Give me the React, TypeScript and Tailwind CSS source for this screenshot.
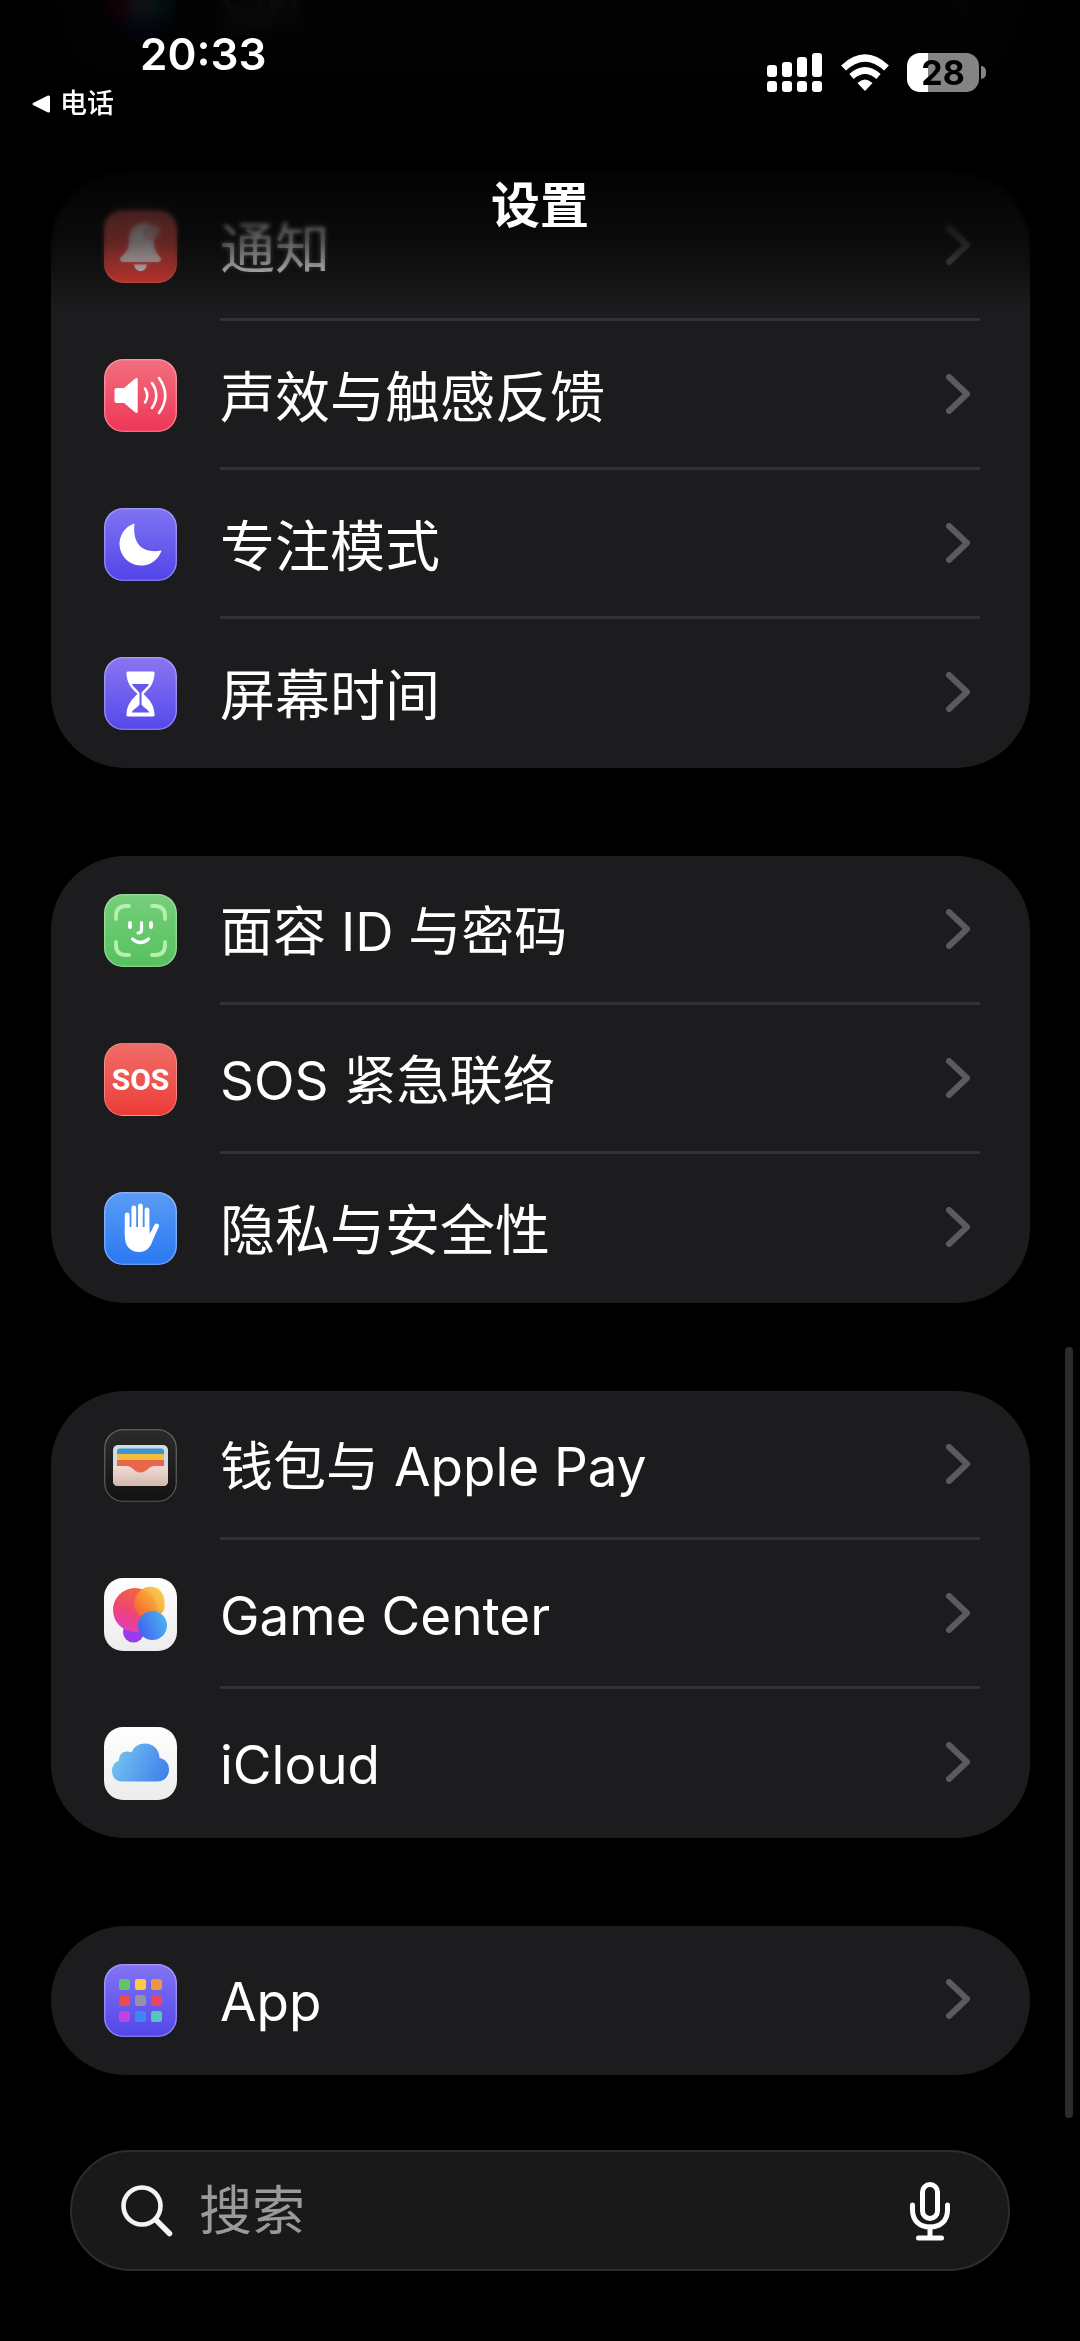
import type { ReactNode } from "react";

type Row = { label: string; icon: ReactNode };

function Tile({ id, from, to, rim = 0.35, children }: { id: string; from: string; to: string; rim?: number; children?: ReactNode }) {
  return (
    <svg viewBox="0 0 73 73" className="size-[73px] shrink-0" aria-hidden="true">
      <defs>
        <linearGradient id={id} x1="0" y1="0" x2="0" y2="1">
          <stop offset="0" stopColor={from} />
          <stop offset="1" stopColor={to} />
        </linearGradient>
      </defs>
      <rect width="73" height="73" rx="19" fill={`url(#${id})`} />
      <rect x="0.75" y="0.75" width="71.5" height="71.5" rx="18.5" fill="none" stroke="#fff" strokeOpacity={rim} strokeWidth="1.2" />
      {children}
    </svg>
  );
}

function SiriIcon() {
  return (
    <Tile id="siri" from="#1c1c1e" to="#111" rim={0.1}>
      <circle cx="20" cy="34" r="16" fill="#e0246a" />
      <circle cx="54" cy="34" r="16" fill="#1cc8b4" />
      <circle cx="38" cy="52" r="16" fill="#2a50f0" />
      <circle cx="38" cy="34" r="12" fill="#cfe8ff" />
    </Tile>
  );
}

function BellIcon() {
  return (
    <Tile id="bell" from="#f4706b" to="#ef4038" rim={0.15}>
      <path
        d="M44 13 C32 12 25 19 25 30 C25 39 22 43 17 47 C15 49 16 52 19 52 H54 C57 52 58 49 56 47 C53 44 51 40 50 36 L50 28 L57 17 C53 20 48 15 44 13 Z"
        fill="#fff"
        fillOpacity="0.9"
      />
      <path d="M30 54.500 H43 C42 59 39.500 61 36.500 61 C33.500 61 31 59 30 54.500 Z" fill="#fff" />
      <circle cx="48" cy="22" r="9" fill="#f0a8a4" fillOpacity="0.55" />
    </Tile>
  );
}

function SoundIcon() {
  return (
    <Tile id="sound" from="#f2707f" to="#ee3656">
      <path d="M13 29 H20 L31 19.700 C32.500 18.500 33.700 19 33.700 20.700 V52.300 C33.700 54 32.500 54.500 31 53.300 L20 44 H13 C11.300 44 10.500 43.200 10.500 41.500 V31.500 C10.500 29.800 11.300 29 13 29 Z" fill="#fff" />
      <g fill="none" stroke="#fff" strokeWidth="2.600" strokeLinecap="round">
        <path d="M41 29.500 Q45.500 36.500 41 43.500" />
        <path d="M48 24 Q56.500 36.500 48 49" />
        <path d="M55 19 Q67.500 36.500 55 54" />
      </g>
    </Tile>
  );
}

function MoonIcon() {
  return (
    <Tile id="moon" from="#7f74f2" to="#5145e8">
      <path d="M30.500 15.500 C28 35 38 46 57.500 42.500 A21.500 21.500 0 1 1 30.500 15.500 Z" fill="#fff" />
    </Tile>
  );
}

function HourglassIcon() {
  return (
    <Tile id="hourglass" from="#8a76f2" to="#5548ea">
      <path
        d="M24 14.500 H49 Q51 14.500 50.500 17 C50 26 46 31 39.500 37 C46 43 50 48 50.500 57 Q51 59.500 49 59.500 H24 Q22 59.500 22.500 57 C23 48 27 43 33.500 37 C27 31 23 26 22.500 17 Q22 14.500 24 14.500 Z"
        fill="#fff"
      />
      <path d="M28 27 H45 C43 31 39 33 37.500 36 V47.500 C39 50 43.500 52 45.500 55.500 H27.500 C29.500 52 34 50 35.500 47.500 V36 C34 33 30 31 28 27 Z" fill="#6558ec" />
    </Tile>
  );
}

function FaceIcon() {
  return (
    <Tile id="face" from="#76cf7c" to="#56c15d">
      <g fill="none" stroke="#b6efae" strokeWidth="3.800" strokeLinecap="round">
        <path d="M12 25 V22 Q12 12 22 12 H25" />
        <path d="M48 12 H51 Q61 12 61 22 V25" />
        <path d="M12 48 V51 Q12 61 22 61 H25" />
        <path d="M48 61 H51 Q61 61 61 51 V48" />
      </g>
      <g fill="none" stroke="#fff" strokeWidth="3.800" strokeLinecap="round">
        <path d="M26 29 V33" />
        <path d="M47 29 V33" />
        <path d="M37.500 28.500 V36 Q37.500 39 34 39" strokeWidth="3.200" />
        <path d="M28.500 45 Q36.500 52 44.500 45" strokeWidth="3.200" />
      </g>
    </Tile>
  );
}

function SosIcon() {
  return (
    <span className="grid size-[73px] shrink-0 place-items-center rounded-[19px] border border-white/30 bg-linear-to-b from-[#f06c68] to-[#ec3a37] font-['Roboto','Liberation_Sans',sans-serif] text-[30px] leading-none font-bold text-white">
      SOS
    </span>
  );
}

function HandIcon() {
  return (
    <Tile id="hand" from="#5a9cf5" to="#2a78f2">
      <g stroke="#fff" strokeWidth="4.800" strokeLinecap="round" fill="none">
        <path d="M23.200 23 V42" />
        <path d="M29.800 16 V40" />
        <path d="M36.400 14 V40" />
        <path d="M43 18 V42" />
        <path d="M52.500 34 L46 47" />
      </g>
      <path d="M20.800 35 H45.400 V42 L50 36 L54.500 35 L48.500 49 C46 56 42 60 35.500 60 C26 60 20.800 54 20.800 44 Z" fill="#fff" />
    </Tile>
  );
}

function WalletIcon() {
  return (
    <Tile id="wallet" from="#2b2b2c" to="#121213" rim={0.3}>
      <defs>
        <linearGradient id="pocket" x1="0" y1="0" x2="0" y2="1">
          <stop offset="0" stopColor="#efdcd4" />
          <stop offset="1" stopColor="#d3b8ad" />
        </linearGradient>
      </defs>
      <rect x="9" y="16" width="55" height="41" rx="5" fill="#cfdde2" />
      <path d="M13 25 V22 Q13 19.500 16 19.500 H57 Q60 19.500 60 22 V25 Z" fill="#3d96d4" />
      <rect x="13" y="25" width="47" height="6" fill="#f3bd3c" />
      <rect x="13" y="31" width="47" height="14" fill="#e8664a" />
      <path
        d="M9 37 H22 C29 37 30 43.500 36.500 43.500 C43 43.500 44 37 51 37 H64 V52 Q64 57 59 57 H14 Q9 57 9 52 Z"
        fill="url(#pocket)"
      />
    </Tile>
  );
}

function GameCenterIcon() {
  return (
    <Tile id="game" from="#ffffff" to="#ececee" rim={0}>
      <defs>
        <linearGradient id="gcRed" x1="0.7" y1="0" x2="0.3" y2="1">
          <stop offset="0" stopColor="#f4683c" />
          <stop offset="0.550" stopColor="#ee4672" />
          <stop offset="1" stopColor="#e23cc0" />
        </linearGradient>
        <linearGradient id="gcYellow" x1="1" y1="0" x2="0" y2="1">
          <stop offset="0" stopColor="#f9d03c" />
          <stop offset="0.400" stopColor="#f8a834" />
          <stop offset="1" stopColor="#f2502c" />
        </linearGradient>
        <linearGradient id="gcBlue" x1="1" y1="0.2" x2="0" y2="0.6">
          <stop offset="0" stopColor="#4cb4f4" />
          <stop offset="1" stopColor="#3e66ec" />
        </linearGradient>
      </defs>
      <circle cx="29.500" cy="54" r="10.500" fill="#9a3cec" />
      <circle cx="31" cy="32" r="22" fill="url(#gcRed)" />
      <path d="M40 10 Q52 6 58 15 Q62 21 60 32 Q57 38 46 44 Q32 40 30 26 Q31 15 40 10 Z" fill="url(#gcYellow)" fillOpacity="0.9" />
      <circle cx="48.500" cy="47.500" r="14.500" fill="url(#gcBlue)" />
    </Tile>
  );
}

function CloudIcon() {
  return (
    <Tile id="icloud" from="#ffffff" to="#ececee" rim={0}>
      <defs>
        <linearGradient id="cloudFill" x1="0" y1="0.4" x2="1" y2="0.7">
          <stop offset="0" stopColor="#73c4f0" />
          <stop offset="1" stopColor="#4080ec" />
        </linearGradient>
      </defs>
      <path
        d="M18 54.500 C11.500 54.500 8 49.500 8 44 C8 38.500 11 35 15 33.500 C14.500 27 20.500 22.500 27.500 25.500 C30 19.500 35 16.500 41 16.500 C49.500 16.500 55.500 23 55.500 31 C61.500 32 65 36.500 65 42.500 C65 49.500 60 54.500 53.500 54.500 Z"
        fill="url(#cloudFill)"
      />
    </Tile>
  );
}

const dots = ["#62c46c", "#f8cb46", "#ee9545", "#ec4a4c", "#9492a4", "#ea4664", "#c244e0", "#3f88f4", "#58c4c0"];

function AppsIcon() {
  return (
    <Tile id="apps" from="#8374f4" to="#5246ea">
      {dots.map((color, i) => (
        <rect key={color} x={15 + (i % 3) * 16} y={15 + Math.floor(i / 3) * 16} width="11" height="11" rx="2.500" fill={color} />
      ))}
    </Tile>
  );
}

function Chevron() {
  return (
    <svg viewBox="0 0 24 40" className="h-10 w-6 shrink-0" fill="none" stroke="#5b5b5f" strokeWidth="6" strokeLinecap="round" strokeLinejoin="round" aria-hidden="true">
      <path d="M3 3 L21 20 L3 37" />
    </svg>
  );
}

const groups: Row[][] = [
  [{ label: "Siri", icon: <SiriIcon /> }],
  [
    { label: "通知", icon: <BellIcon /> },
    { label: "声效与触感反馈", icon: <SoundIcon /> },
    { label: "专注模式", icon: <MoonIcon /> },
    { label: "屏幕时间", icon: <HourglassIcon /> },
  ],
  [
    { label: "面容 ID 与密码", icon: <FaceIcon /> },
    { label: "SOS 紧急联络", icon: <SosIcon /> },
    { label: "隐私与安全性", icon: <HandIcon /> },
  ],
  [
    { label: "钱包与 Apple Pay", icon: <WalletIcon /> },
    { label: "Game Center", icon: <GameCenterIcon /> },
    { label: "iCloud", icon: <CloudIcon /> },
  ],
  [{ label: "App", icon: <AppsIcon /> }],
];

const hasLatin = (label: string) => /[A-Za-z]/.test(label);

function Group({ rows }: { rows: Row[] }) {
  return (
    <ul className="overflow-hidden rounded-[74px] bg-[#1c1c1e]">
      {rows.map((row, i) => (
        <li key={row.label}>
          <button type="button" className="flex w-full items-center gap-[43px] pr-[50px] pl-[53px] text-left">
            {row.icon}
            <span
              className={`flex h-[149px] min-w-0 flex-1 items-center justify-between border-b-3 pr-[10px] ${
                i < rows.length - 1 ? "border-[#323235]" : "border-transparent"
              }`}
            >
              <span className={`pt-1.5 leading-[60px] ${hasLatin(row.label) ? "text-[53px]" : "text-[55px]"}`}>{row.label}</span>
              <Chevron />
            </span>
          </button>
        </li>
      ))}
    </ul>
  );
}

function StatusBar() {
  return (
    <div className="flex items-start justify-between pr-[94px] pl-8">
      <div>
        <div className="pt-[30px] pl-[108px] text-[44px] leading-12 font-semibold">20:33</div>
        <button type="button" className="mt-2 flex items-center gap-[10px] text-[27px] leading-9 font-medium">
          <svg viewBox="0 0 18 18" className="size-[18px]" fill="#fff" aria-hidden="true">
            <path d="M16 0.500 Q18 0 18 2 V16 Q18 18 16 17.500 L1 10 Q0 9 1 8 Z" />
          </svg>
          电话
        </button>
      </div>
      <div className="mt-[53px] flex items-center gap-[18px]">
        <svg viewBox="0 0 56 39" className="h-[39px] w-14" fill="#fff" aria-hidden="true">
          <rect x="0" y="12" width="10" height="12" rx="3" />
          <rect x="15" y="9" width="10" height="15" rx="3" />
          <rect x="30" y="4" width="10" height="20" rx="3" />
          <rect x="45" y="0" width="10" height="24" rx="3" />
          <rect x="0" y="28" width="10" height="11" rx="3" />
          <rect x="15" y="28" width="10" height="11" rx="3" />
          <rect x="30" y="28" width="10" height="11" rx="3" />
          <rect x="45" y="28" width="10" height="11" rx="3" />
        </svg>
        <svg viewBox="0 0 48 38" className="h-[38px] w-12" aria-hidden="true">
          <path d="M2.500 14 Q24 -6 45.500 14" fill="none" stroke="#fff" strokeWidth="7" />
          <path d="M10.500 22.500 Q24 10.500 37.500 22.500" fill="none" stroke="#fff" strokeWidth="6.500" />
          <path d="M24 37 L16.500 29 Q24 22 31.500 29 Z" fill="#fff" />
        </svg>
        <div className="flex items-center gap-[2px]">
          <div className="grid h-[39px] w-[72px] place-items-center rounded-[13px] bg-linear-to-r from-white from-29% to-[#848484] to-29% text-[34px] leading-none font-bold text-black">
            28
          </div>
          <div className="h-[13px] w-[5px] rounded-r-full bg-[#848484]" />
        </div>
      </div>
    </div>
  );
}

export default function App() {
  return (
    <div className="relative min-h-screen overflow-hidden bg-black font-['Inter','Noto_Sans_CJK_SC',sans-serif] text-white">
      <main className="-mt-[65px] flex flex-col gap-[88px] pr-[50px] pl-[51px]">
        {groups.map((rows) => (
          <Group key={rows[0].label} rows={rows} />
        ))}
      </main>

      {/* Floating search field */}
      <div className="mx-[70px] mt-[75px] mb-[70px] flex h-[121px] items-center gap-[26px] rounded-full border-2 border-[#2c2c2d] bg-[#191919] pr-[58px] pl-[49px]">
        <svg viewBox="0 0 52 52" className="size-[52px] shrink-0" fill="none" stroke="#f4f4f4" strokeLinecap="round" aria-hidden="true">
          <circle cx="21" cy="21" r="18.500" strokeWidth="4.600" />
          <path d="M35 35 L48.500 48.500" strokeWidth="5.500" />
        </svg>
        <input
          type="search"
          aria-label="搜索"
          placeholder="搜索"
          className="min-w-0 flex-1 bg-transparent text-[53px] leading-[60px] outline-none placeholder:text-[#9a9a9a]"
        />
        <button type="button" aria-label="语音输入" className="shrink-0">
          <svg viewBox="0 0 40 60" className="h-[60px] w-10" fill="none" stroke="#fff" strokeWidth="5" strokeLinecap="round" aria-hidden="true">
            <rect x="12.500" y="3.500" width="15" height="34" rx="7.500" />
            <path d="M2.500 24 V29 C2.500 40 10 46 20 46 C30 46 37.500 40 37.500 29 V24" />
            <path d="M20 46 V57 M8.500 57 H31.500" />
          </svg>
        </button>
      </div>

      {/* Progressive blur and fade under the header */}
      <div className="pointer-events-none absolute inset-x-0 top-0 h-[280px] backdrop-blur-[2px] [mask-image:linear-gradient(to_bottom,black_80%,transparent)]" />
      <div className="pointer-events-none absolute inset-x-0 top-0 h-[220px] backdrop-blur-[8px] [mask-image:linear-gradient(to_bottom,black_70%,transparent)]" />
      <div className="pointer-events-none absolute inset-x-0 top-0 h-[310px] bg-linear-to-b from-black/92 from-50% via-black/60 via-78% to-transparent" />

      <header className="absolute inset-x-0 top-0">
        <StatusBar />
        <h1 className="pt-[54px] text-center text-[49px] leading-[60px] font-semibold">设置</h1>
      </header>

      {/* Scroll indicator */}
      <div className="absolute top-[1347px] right-[7px] h-[771px] w-2 rounded-full bg-[#2c2c2d]" />
    </div>
  );
}
